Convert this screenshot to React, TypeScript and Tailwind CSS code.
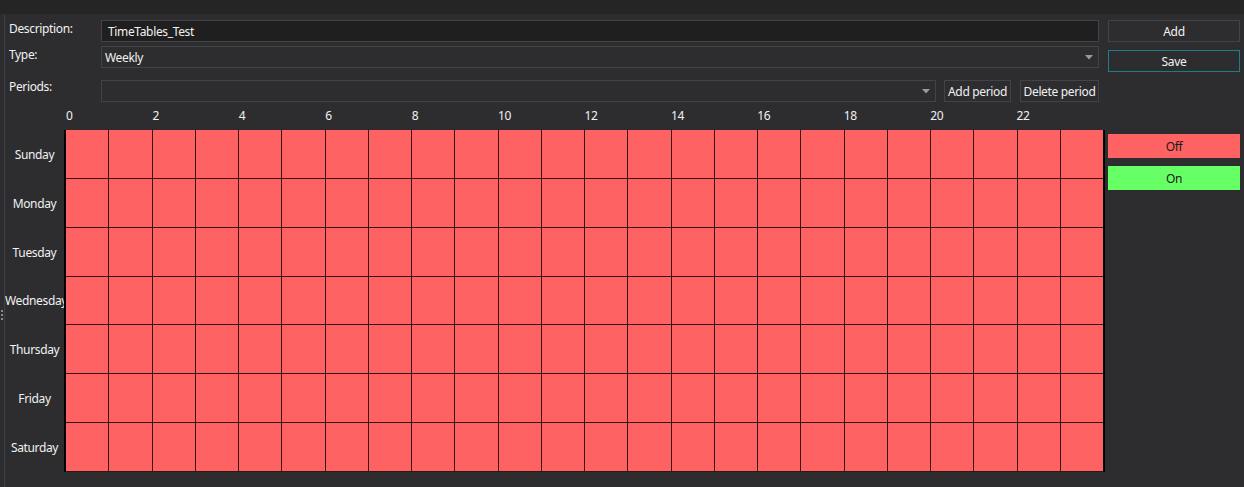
import React from "react";

const days = ["Sunday", "Monday", "Tuesday", "Wednesday", "Thursday", "Friday", "Saturday"];
const hours = [0, 2, 4, 6, 8, 10, 12, 14, 16, 18, 20, 22];

function Arrow() {
  return (
    <svg width="8" height="5" viewBox="0 0 8 5" className="shrink-0">
      <polygon points="0,0 8,0 4,4.5" fill="#9a9a9a" />
    </svg>
  );
}

export default function App() {
  const font = { fontFamily: '"Noto Sans", "Open Sans", sans-serif' };
  return (
    <div
      className="w-[1244px] h-[487px] bg-[#2d2d30] flex flex-col text-[12px] leading-[16px] tracking-[-0.35px] text-[#f1f1f1] overflow-hidden"
      style={font}
    >
      <div className="h-[14px] bg-[#252526] shrink-0" />
      <div className="flex flex-1 min-h-0">
        {/* left strip */}
        <div className="w-[5px] shrink-0 border-r border-[#3f3f46] relative">
          <div className="absolute left-[1px] top-[296px] flex flex-col gap-[2px]">
            <div className="w-[2px] h-[2px] bg-[#8a8a8a]" />
            <div className="w-[2px] h-[2px] bg-[#8a8a8a]" />
            <div className="w-[2px] h-[2px] bg-[#8a8a8a]" />
          </div>
        </div>
        {/* main */}
        <div className="w-[1100px] shrink-0 flex flex-col">
          <div className="flex mt-[6px] h-[22px]">
            <div className="w-[96px] pl-[4px] pt-[1px]">Description:</div>
            <div className="w-[998px] h-[22px] bg-[#1f1f1f] border border-[#434346] flex items-center pl-[6px] pt-[1px]">
              TimeTables_Test
            </div>
          </div>
          <div className="flex mt-[4px] h-[22px]">
            <div className="w-[96px] pl-[4px] pt-[1px]">Type:</div>
            <div className="w-[998px] h-[22px] bg-[#2d2d30] border border-[#434346] flex items-center pl-[3px] pr-[5px] justify-between">
              <span className="pt-[1px]">Weekly</span>
              <Arrow />
            </div>
          </div>
          <div className="flex mt-[12px] h-[22px]">
            <div className="w-[96px] pl-[4px] -mt-[1px]">Periods:</div>
            <div className="w-[835px] h-[22px] bg-[#2d2d30] border border-[#434346] flex items-center justify-end pr-[5px]">
              <Arrow />
            </div>
            <div className="w-[67px] h-[22px] ml-[8px] bg-[#2d2d30] border border-[#434346] flex items-center justify-center whitespace-nowrap pt-[1px]">
              Add period
            </div>
            <div className="w-[79px] h-[22px] ml-[9px] bg-[#2d2d30] border border-[#434346] flex items-center justify-center whitespace-nowrap pt-[1px]">
              Delete period
            </div>
          </div>
          {/* hours */}
          <div className="h-[28px] pl-[61px] pr-[2px] flex items-center">
            <div className="grid grid-cols-12 w-full">
              {hours.map((h) => (
                <div key={h}>{h}</div>
              ))}
            </div>
          </div>
          {/* grid */}
          <div className="flex">
            <div className="w-[59px] shrink-0 grid grid-rows-7 h-[342px]">
              {days.map((d) => (
                <div key={d} className="flex items-center overflow-hidden pt-[1px]">
                  <div className="w-full text-center whitespace-nowrap">{d}</div>
                </div>
              ))}
            </div>
            <div className="w-[1041px] h-[342px] border-l-2 border-r-2 border-black bg-[#3a1414] grid grid-cols-24 grid-rows-7 gap-px pb-px">
              {Array.from({ length: 7 * 24 }).map((_, i) => (
                <div key={i} className="bg-[#ff6262]" />
              ))}
            </div>
          </div>
        </div>
        {/* right column */}
        <div className="w-[132px] ml-[3px] shrink-0 flex flex-col">
          <div className="mt-[6px] h-[22px] bg-[#2d2d30] border border-[#434346] flex items-center justify-center pt-[1px]">
            Add
          </div>
          <div className="mt-[8px] h-[22px] bg-[#2d2d30] border border-[#1c7c89] flex items-center justify-center pt-[1px]">
            Save
          </div>
          <div className="mt-[62px] h-[24px] bg-[#ff6262] text-[#1a1a1a] flex items-center justify-center pt-[1px]">
            Off
          </div>
          <div className="mt-[8px] h-[24px] bg-[#66ff66] text-[#1a1a1a] flex items-center justify-center pt-[1px]">
            On
          </div>
        </div>
      </div>
    </div>
  );
}
